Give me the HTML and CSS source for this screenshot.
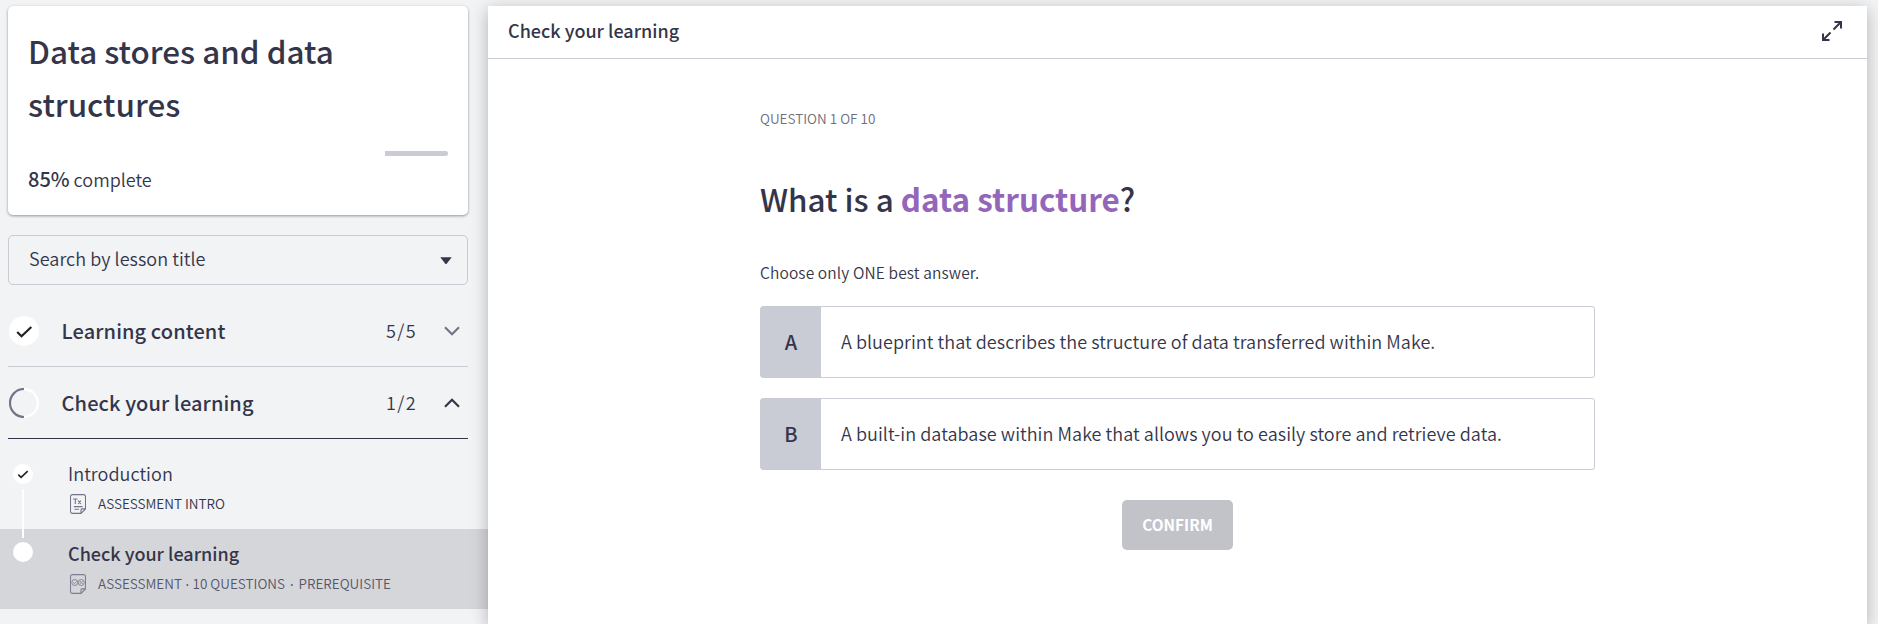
FILE: index.html
```html
<!DOCTYPE html>
<html lang="en">
<head>
<meta charset="utf-8">
<title>Data stores and data structures</title>
<link rel="stylesheet" href="styles.css">
</head>
<body>
<div class="app">
  <aside class="sidebar">
    <section class="course-card">
      <h1 class="course-title">Data stores and data structures</h1>
      <div class="progress"><span class="progress-rest"></span></div>
      <p class="complete"><b>85%</b> complete</p>
    </section>
    <div class="search">
      <span class="search-label">Search by lesson title</span>
      <svg class="caret" width="12" height="7" viewBox="0 0 12 7"><path d="M0.3 0.3h11.4L6.9 6.4a1.2 1.2 0 0 1-1.8 0z" fill="#34354a"/></svg>
    </div>
    <div class="section">
      <svg class="status" width="30" height="30" viewBox="0 0 30 30"><circle cx="15" cy="15" r="15" fill="#fff"/><path d="M8.2 16l4.3 4.2L22.3 11" fill="none" stroke="#222" stroke-width="2.2"/></svg>
      <span class="section-name">Learning content</span>
      <span class="count">5/5</span>
      <svg class="chevron" width="16" height="10" viewBox="0 0 16 10"><path d="M1 1.2l7 7 7-7" fill="none" stroke="#73748a" stroke-width="2.2"/></svg>
    </div>
    <div class="section section-open">
      <svg class="status" width="30" height="30" viewBox="0 0 30 30"><path d="M15 1.2a13.8 13.8 0 0 1 0 27.600" fill="none" stroke="#fff" stroke-width="2.400"/><path d="M15 1a14 14 0 0 0 0 28" fill="none" stroke="#73748a" stroke-width="2.200"/></svg>
      <span class="section-name">Check your learning</span>
      <span class="count">1/2</span>
      <svg class="chevron" width="16" height="10" viewBox="0 0 16 10"><path d="M1 8.800l7-7 7 7" fill="none" stroke="#34354a" stroke-width="2.200"/></svg>
    </div>
    <div class="lessons">
      <div class="lesson">
        <div class="rail">
          <svg width="20" height="20" viewBox="0 0 20 20"><circle cx="10" cy="10" r="10" fill="#fff"/><path d="M5.300 10.600l2.800 2.700 6.600-6.200" fill="none" stroke="#222" stroke-width="1.600"/></svg>
          <span class="rail-line"></span>
        </div>
        <div class="lesson-body">
          <div class="lesson-name">Introduction</div>
          <div class="lesson-meta">
            <svg class="doc" width="16" height="20" viewBox="0 0 16 20" fill="none" stroke="#73748a" stroke-width="1.100"><path d="M2.500.6h11a2 2 0 0 1 2 2V15l-4.500 4.400H2.500a2 2 0 0 1-2-2V2.600a2 2 0 0 1 2-2zM15.400 14.900h-3.400a1 1 0 0 0-1 1v3.400M3.800 12.600h8.800M4.500 15.200h4.500M3 5h4.600M5.300 5v5M8.200 6.600l2.700 3.400M10.900 6.600L8.200 10"/></svg>
            <span>ASSESSMENT INTRO</span>
          </div>
        </div>
      </div>
      <div class="lesson lesson-current">
        <div class="rail"><span class="dot"></span></div>
        <div class="lesson-body">
          <div class="lesson-name name-current">Check your learning</div>
          <div class="lesson-meta">
            <svg class="doc" width="16" height="20" viewBox="0 0 16 20" fill="none" stroke="#7d7e92" stroke-width="1.100"><path d="M2.500.6h11a2 2 0 0 1 2 2V15l-4.500 4.400H2.500a2 2 0 0 1-2-2V2.600a2 2 0 0 1 2-2zM15.400 14.900h-3.400a1 1 0 0 0-1 1v3.400"/><g stroke-width=".9"><circle cx="4.800" cy="8.500" r="3"/><circle cx="11.300" cy="8.500" r="3"/><path d="M3.300 8.500l1.200 1.200 2-2.200M10 7.200l2.600 2.600M12.600 7.200L10 9.800"/></g></svg>
            <span>ASSESSMENT</span><span class="sep">·</span><span>10 QUESTIONS</span><span class="sep sep-wide">·</span><span>PREREQUISITE</span>
          </div>
        </div>
      </div>
    </div>
  </aside>
  <main class="main">
    <header class="header">
      <span class="header-title">Check your learning</span>
      <svg class="expand" width="20" height="20" viewBox="0 0 20 20" fill="none" stroke="#34354a" stroke-width="2"><path d="M12.500 1H19v6.500M19 1l-7.500 7.500M1 12.500V19h6.500M1 19l7.500-7.500"/></svg>
    </header>
    <div class="quiz">
      <div class="step">QUESTION 1 OF 10</div>
      <h2 class="question">What is a <b>data structure</b>?</h2>
      <p class="hint">Choose only ONE best answer.</p>
      <div class="option"><span class="letter">A</span><span class="answer">A blueprint that describes the structure of data transferred within Make.</span></div>
      <div class="option"><span class="letter">B</span><span class="answer">A built-in database within Make that allows you to easily store and retrieve data.</span></div>
      <button class="confirm" type="button">CONFIRM</button>
    </div>
  </main>
</div>
</body>
</html>
```
FILE: styles.css
```css
* { box-sizing: border-box; }
body {
  margin: 0;
  height: 624px;
  overflow: hidden;
  background: #f1f3f5;
  color: #34354a;
  font-family: "Noto Sans CJK SC", "Open Sans", sans-serif;
  font-weight: 350;
}
h1, h2, p { margin: 0; }
svg { display: block; flex: none; }
.app { display: flex; height: 624px; white-space: nowrap; }

.sidebar { width: 488px; padding-top: 6px; }
.course-card {
  width: 460px;
  height: 209px;
  margin-left: 8px;
  padding: 18px 20px 0;
  background: #fff;
  border-radius: 5px;
  box-shadow: 0 1px 3px rgba(0, 0, 0, .4);
}
.course-title { font-size: 31.400px; line-height: 53px; font-weight: 500; white-space: normal; }
.progress { display: flex; justify-content: flex-end; height: 5px; margin-top: 21px; }
.progress-rest { width: 63px; background: #c9cbd5; border-radius: 0 3px 3px 0; }
.complete { margin-top: 8px; font-size: 18px; line-height: 30px; }
.complete b { font-size: 20px; line-height: 20px; font-weight: 500; }

.search {
  display: flex;
  align-items: center;
  justify-content: space-between;
  width: 460px;
  height: 50px;
  margin: 20px 0 0 8px;
  padding: 0 15px 0 20px;
  border: 1px solid #c9cbd5;
  border-radius: 5px;
}
.search-label { margin-top: -4px; font-size: 18px; line-height: 30px; letter-spacing: .05px; }

.section {
  display: flex;
  align-items: center;
  width: 460px;
  height: 72px;
  margin-left: 8px;
  padding-right: 8px;
  border-bottom: 1px solid #c9cbd5;
}
.search + .section { margin-top: 10px; }
.section-open { border-color: #34354a; }
.status { margin-left: 1px; }
.section-name { margin-left: 22.600px; font-size: 20px; font-weight: 500; line-height: 30px; letter-spacing: .1px; }
.count { margin: -1px 0 0 auto; font-size: 18px; letter-spacing: 1.400px; line-height: 30px; }
.chevron { margin-left: 27px; }

.lessons { padding-top: 10px; }
.lesson { display: flex; height: 80px; }
.lesson-current { background: #d5d6da; }
.rail { display: flex; flex-direction: column; align-items: center; width: 46px; padding-top: 15px; }
.lesson-current .rail { padding-top: 13px; }
.rail-line { position: relative; width: 2px; height: 49px; margin-top: 5px; flex: none; background: #fff; }
.dot { width: 20px; height: 20px; border-radius: 50%; background: #fff; }
.lesson-body { margin-left: 22px; padding-top: 9px; }
.lesson-name { font-size: 18px; line-height: 30px; letter-spacing: .05px; }
.name-current { font-weight: 500; letter-spacing: 0; }
.lesson-meta { display: flex; align-items: center; height: 20px; margin-top: 5px; font-size: 13.500px; line-height: 20px; }
.lesson-current .lesson-meta { color: #55566a; }
.doc { margin: 1px 12px 0 2px; }
.sep { width: 10.500px; margin-top: 3px; text-align: center; font-family: "Noto Sans", sans-serif; font-weight: 400; }
.sep-wide { width: 13.500px; }

.main {
  width: 1379px;
  height: 618px;
  margin-top: 6px;
  background: #fff;
  box-shadow: 0 4px 16px rgba(0, 0, 0, .27);
}
.header {
  display: flex;
  align-items: center;
  justify-content: space-between;
  height: 53px;
  padding: 0 25px 0 20px;
  border-bottom: 1px solid #c9cbd5;
}
.header-title { margin-top: -4px; font-size: 18px; line-height: 30px; font-weight: 500; }
.expand { margin-top: -2px; }
.quiz { display: flex; flex-direction: column; width: 835px; margin-left: 272px; padding-top: 49px; }
.step { font-size: 13.500px; line-height: 20px; color: #6d6e7e; }
.question { margin-top: 45px; font-size: 31.400px; line-height: 52px; font-weight: 500; }
.question b { color: #9466ba; font-weight: 700; }
.hint { margin: 35px 0 22px; font-size: 15.500px; line-height: 24px; letter-spacing: .13px; }
.option { display: flex; align-items: center; height: 72px; margin-bottom: 20px; border: 1px solid #c9cbd5; border-radius: 3px; }
.letter { display: flex; align-items: center; justify-content: center; align-self: stretch; width: 60px; padding-bottom: 2px; background: #c9cbd5; font-size: 20px; font-weight: 500; }
.answer { margin: -2px 0 0 20px; font-size: 18px; line-height: 30px; letter-spacing: .05px; }
.confirm {
  align-self: center;
  width: 111px;
  height: 50px;
  margin: 10px 0 0;
  padding: 0 0 2px;
  border: 0;
  border-radius: 5px;
  background: #c2c3c9;
  color: #fff;
  font: 700 15.400px/24px "Noto Sans CJK SC", sans-serif;
}
```
